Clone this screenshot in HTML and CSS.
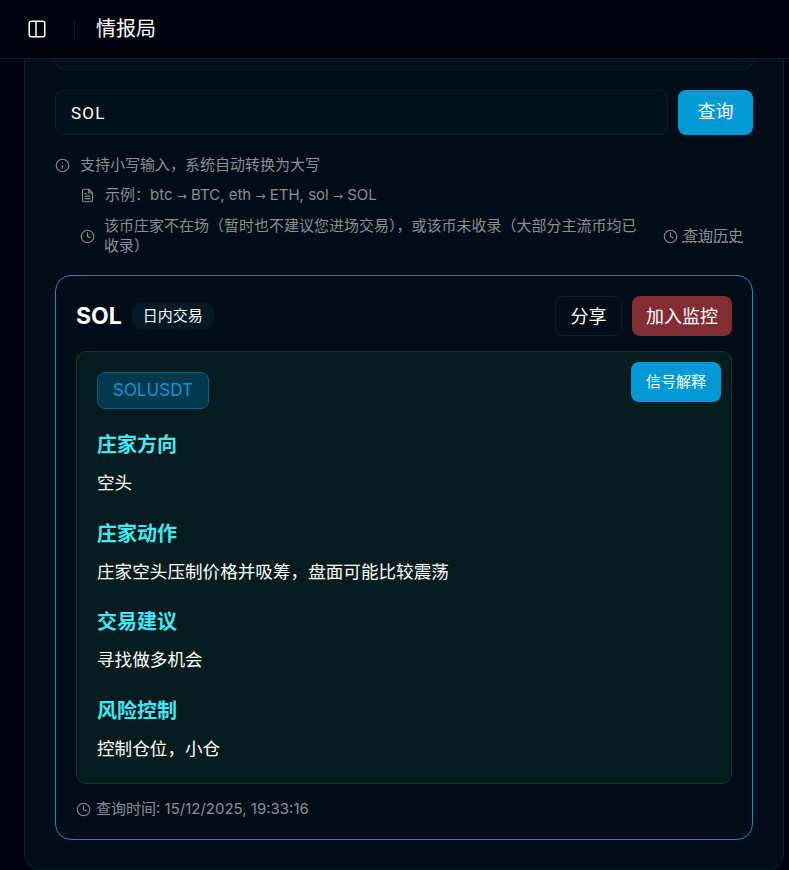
FILE: index.html
```html
<!DOCTYPE html>
<html lang="zh-CN">
<head>
  <meta charset="UTF-8" />
  <title>情报局</title>
  <link rel="stylesheet" href="styles.css">
</head>
<body>

  <header class="topbar">
    <button class="menu-btn" aria-label="toggle sidebar">
      <svg width="18" height="18" viewBox="0 0 18 18" fill="none" stroke="#fff" stroke-width="1.5">
        <rect x="1.25" y="1.25" width="15.5" height="15.5" rx="2"/>
        <path d="M8 1.5v15"/>
      </svg>
    </button>
    <span class="topbar-line"></span>
    <h1>情报局</h1>
  </header>

  <main class="content">
    <section class="panel">
      <div class="stub"></div>

      <form class="search">
        <input type="text" value="SOL" />
        <button type="button" class="primary">查询</button>
      </form>

      <div class="hints">
        <p class="hint">
          <svg class="icon" viewBox="0 0 24 24"><circle cx="12" cy="12" r="10"/><path d="M12 16v-4M12 8h.01"/></svg>
          <span>支持小写输入，系统自动转换为大写</span>
        </p>
        <p class="hint sub">
          <svg class="icon" viewBox="0 0 24 24"><path d="M14 2H6a2 2 0 0 0-2 2v16a2 2 0 0 0 2 2h12a2 2 0 0 0 2-2V8z"/><path d="M14 2v6h6M16 13H8M16 17H8M10 9H8"/></svg>
          <span>示例：btc <span class="arrow">→</span> BTC, eth <span class="arrow">→</span> ETH, sol <span class="arrow">→</span> SOL</span>
        </p>
        <div class="hint-row">
          <p class="hint sub grow">
            <svg class="icon" viewBox="0 0 24 24"><circle cx="12" cy="12" r="10"/><path d="M12 6v6l4 2"/></svg>
            <span>该币庄家不在场（暂时也不建议您进场交易），或该币未收录（大部分主流币均已收录）</span>
          </p>
          <a class="history">
            <svg class="icon" viewBox="0 0 24 24"><circle cx="12" cy="12" r="10"/><path d="M12 6v6l4 2"/></svg>
            <span>查询历史</span>
          </a>
        </div>
      </div>

      <article class="result">
        <div class="result-head">
          <div class="result-title">
            <h2>SOL</h2>
            <span class="tag">日内交易</span>
          </div>
          <div class="actions">
            <button type="button" class="ghost">分享</button>
            <button type="button" class="danger">加入监控</button>
          </div>
        </div>

        <div class="signal">
          <button type="button" class="primary explain">信号解释</button>
          <span class="symbol">SOLUSDT</span>

          <h3>庄家方向</h3>
          <p>空头</p>
          <h3>庄家动作</h3>
          <p>庄家空头压制价格并吸筹，盘面可能比较震荡</p>
          <h3>交易建议</h3>
          <p>寻找做多机会</p>
          <h3>风险控制</h3>
          <p>控制仓位，小仓</p>
        </div>

        <div class="query-time">
          <svg class="icon" viewBox="0 0 24 24"><circle cx="12" cy="12" r="10"/><path d="M12 6v6l4 2"/></svg>
          <span>查询时间: 15/12/2025, 19:33:16</span>
        </div>
      </article>
    </section>
  </main>

</body>
</html>
```

FILE: styles.css
```css
* {
  box-sizing: border-box;
}
html, body {
  height: 870px;
  margin: 0;
  overflow: hidden;
}
body {
  background-color: #00030c;
  color: #fff;
  font-family: Inter, "Noto Sans CJK SC", sans-serif;
}
button, input {
  font-family: inherit;
}
p, h1, h2, h3 {
  margin: 0;
}

.topbar {
  height: 59px;
  display: flex;
  align-items: center;
  padding-left: 28px;
  background-color: #00030c;
  border-bottom: 1px solid #04202c;
}
.menu-btn {
  width: 18px;
  height: 18px;
  padding: 0;
  background: none;
  border: none;
  display: flex;
}
.topbar-line {
  width: 1px;
  height: 20px;
  margin: 0 21px 0 28px;
  background-color: #04202c;
}
.topbar h1 {
  font-size: 20px;
  font-weight: 400;
  line-height: 24px;
}

.content {
  padding: 0 5px 0 24px;
}
.panel {
  height: 811px;
  padding: 0 30px;
  background-color: #000c17;
  border: 1px solid #04202c;
  border-top: none;
  border-radius: 0 0 16px 16px;
}
.stub {
  height: 11px;
  background-color: #00111b;
  border: 1px solid #04202c;
  border-top: none;
  border-radius: 0 0 10px 10px;
}

.search {
  display: flex;
  gap: 10px;
  margin-top: 20px;
}
.search input {
  flex: 1;
  min-width: 0;
  height: 45px;
  padding: 0 15px;
  background-color: #00111b;
  border: 1px solid #04202c;
  border-radius: 8px;
  color: #fff;
  font-family: Roboto, sans-serif;
  font-size: 17px;
  letter-spacing: 1.2px;
  outline: none;
}
.primary {
  background-color: #0099d6;
  border: none;
  border-radius: 8px;
  color: #fff;
  cursor: pointer;
}
.search .primary {
  width: 75px;
  height: 45px;
  padding-bottom: 6px;
  font-size: 18px;
}

.hints {
  margin-top: 20px;
  color: #8a8f94;
  font-size: 15px;
  line-height: 20px;
}
.hint {
  display: flex;
  align-items: center;
  gap: 10px;
}
.hint.sub {
  padding-left: 25px;
  margin-top: 10px;
}
.arrow {
  font-family: "DejaVu Sans", sans-serif;
  font-size: 12px;
}
.icon {
  width: 15px;
  height: 15px;
  flex: none;
  fill: none;
  stroke: #8a8f94;
  stroke-width: 1.8;
  stroke-linecap: round;
  stroke-linejoin: round;
}
.grow .icon {
  margin-right: -1px;
}
.hint-row {
  display: flex;
  align-items: center;
  gap: 17px;
  padding-right: 10px;
}
.grow {
  flex: 1;
  min-width: 0;
}
.history {
  display: flex;
  align-items: center;
  gap: 5px;
  margin-top: 10px;
  font-size: 15px;
  white-space: nowrap;
}
.history span {
  text-decoration: underline dotted;
}

.result {
  height: 565px;
  margin-top: 19px;
  padding: 20px;
  background-color: #000c17;
  border: 1px solid #0d8cc6;
  border-radius: 16px;
}
.result-head {
  display: flex;
  justify-content: space-between;
  align-items: center;
  height: 40px;
}
.result-title {
  display: flex;
  align-items: center;
  gap: 10px;
}
.result-title h2 {
  font-size: 23px;
  font-weight: 700;
  line-height: 28px;
}
.tag {
  height: 26px;
  padding: 0 11px;
  background-color: #021926;
  border-radius: 8px;
  font-size: 15px;
  line-height: 25px;
}
.actions {
  display: flex;
  gap: 10px;
}
.actions button {
  height: 40px;
  padding-bottom: 3px;
  border-radius: 8px;
  color: #fff;
  font-size: 18px;
  cursor: pointer;
}
.ghost {
  width: 67px;
  background-color: #000c17;
  border: 1px solid #04202c;
}
.danger {
  width: 100px;
  background-color: #812d33;
  border: none;
}

.signal {
  position: relative;
  height: 433px;
  margin-top: 15px;
  padding: 20px;
  background-color: #041c1e;
  border: 1px solid #0b382e;
  border-radius: 10px;
}
.explain {
  position: absolute;
  top: 10px;
  right: 10px;
  width: 90px;
  height: 40px;
  padding-bottom: 4px;
  font-size: 15px;
}
.symbol {
  display: block;
  width: 112px;
  height: 37px;
  background-color: #00384c;
  border: 1px solid #07627f;
  border-radius: 8px;
  color: #0099d6;
  font-size: 17px;
  line-height: 35px;
  text-align: center;
}
.signal h3 {
  margin-top: 22px;
  color: #42e8f5;
  font-size: 20px;
  font-weight: 700;
  line-height: 28px;
}
.signal p {
  margin-top: 10px;
  font-size: 17.6px;
  line-height: 28.5px;
}
.query-time {
  display: flex;
  align-items: center;
  gap: 5px;
  margin-top: 15px;
  color: #8a8f94;
  font-size: 15px;
  line-height: 20px;
}
```
